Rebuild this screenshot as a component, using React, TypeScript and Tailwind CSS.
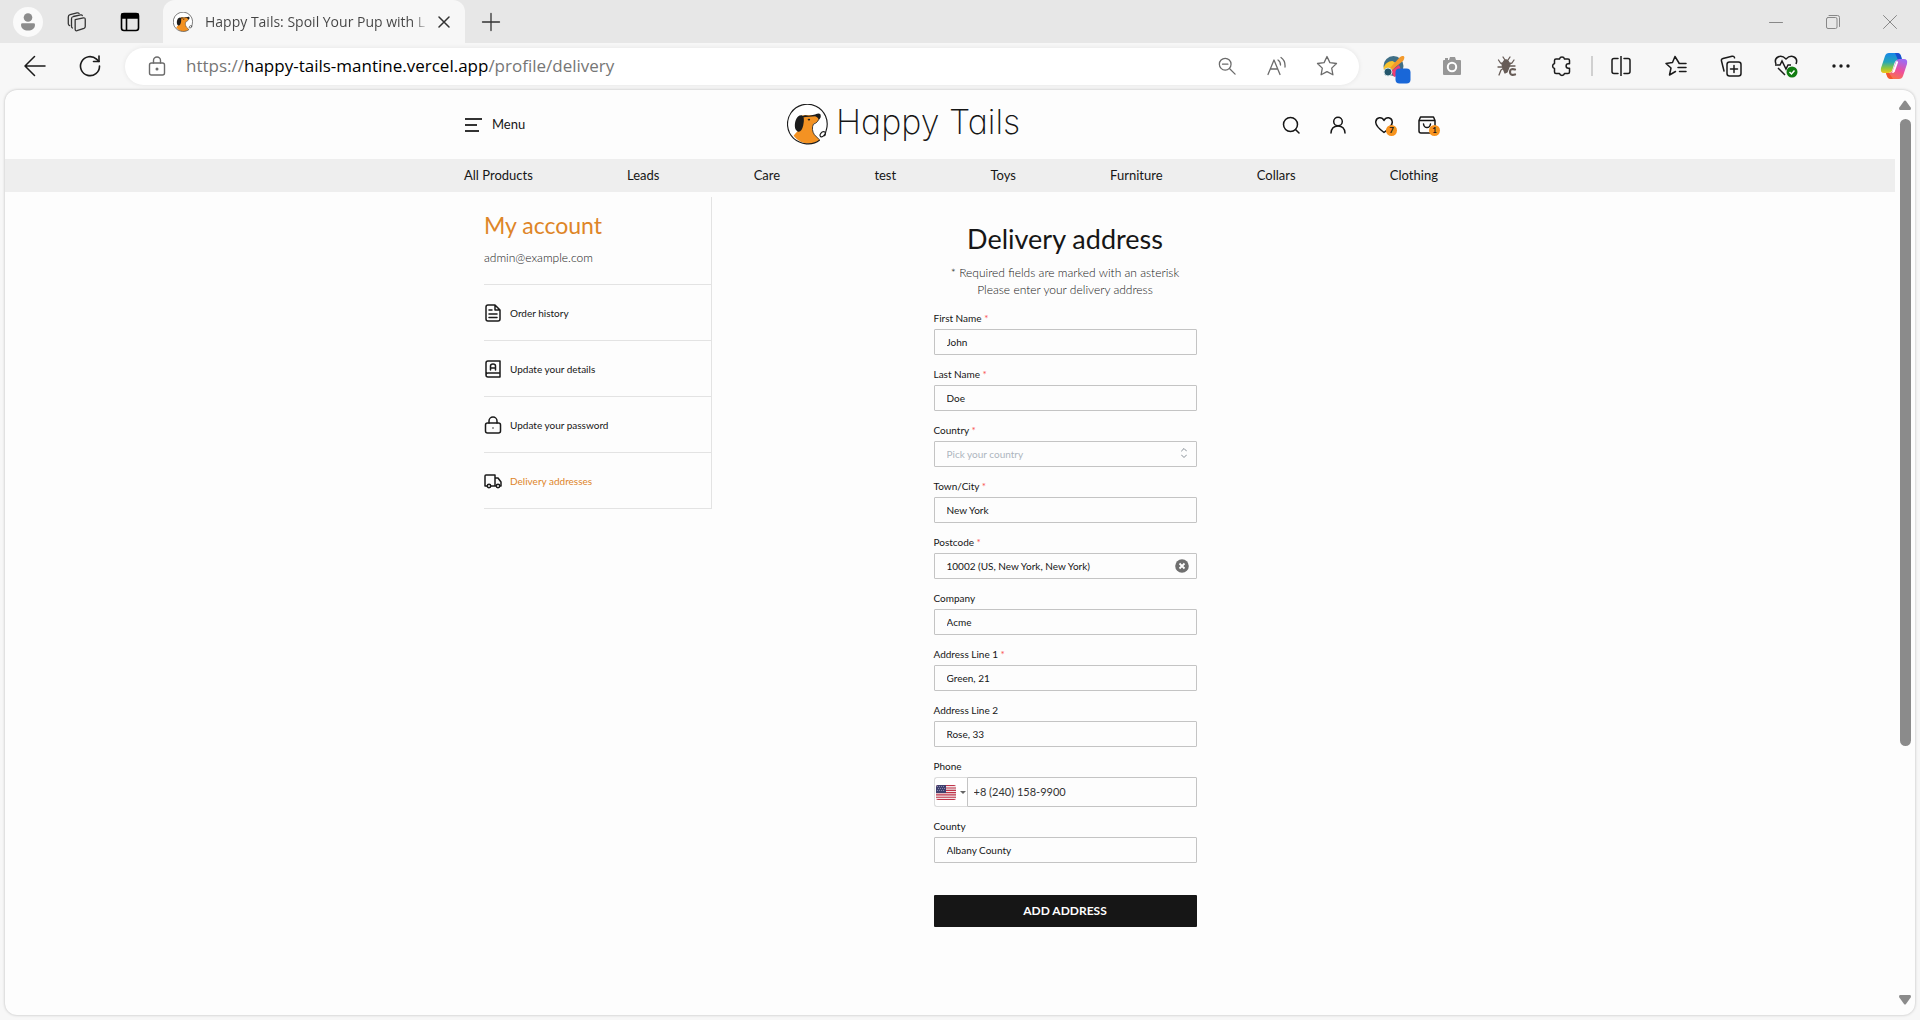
import type { ReactNode } from "react";

type SvgProps = { className?: string; children: ReactNode; box?: string; sw?: number };
const Stroke = ({ className = "size-5", children, box = "0 0 24 24", sw = 1.5 }: SvgProps) => (
  <svg className={className} viewBox={box} fill="none" stroke="currentColor" strokeWidth={sw} strokeLinecap="round" strokeLinejoin="round" aria-hidden="true">
    {children}
  </svg>
);

const DogMark = ({ className }: { className: string }) => (
  <svg className={className} viewBox="0 0 124 124" aria-hidden="true">
    <circle cx="62" cy="62" r="60" fill="#fff" />
    <path d="M20 96C25 88 33 82 38 76C42 68 43 48 46 35C54 30 60 36 68 33C78 34 88 33 98 36C98 48 92 56 80 60C75 70 76 84 83 93L99 109C76 128 40 122 20 96Z" fill="#f39223" />
    <path d="M99 109C76 128 40 122 20 104A60 60 0 1 1 119 78C117 92 108 102 102 99C96 94 105 82 113 84C118 86 117 93 113 97" fill="none" stroke="#1c1c1c" strokeWidth="3.5" />
    <path d="M98 38C97 50 90 58 80 61C75 70 76 84 83 93L98 108" fill="none" stroke="#1c1c1c" strokeWidth="2.5" />
    <path d="M47 37C59 30 62 38 74 34L85 32C92 29 97 27 101 31C104 38 101 44 97 47C94 42 90 39 85 37C73 38 60 38 47 41Z" fill="#1c1c1c" />
    <path d="M45 34C54 38 51 55 49 65C46 79 40 86 32 83C22 79 22 60 27 48C30 39 37 33 45 34Z" fill="#1c1c1c" />
    <path d="M62 48C64 43 70 44 70 46C70 50 66 51 64 49" fill="#1c1c1c" />
  </svg>
);

const TitleBar = () => (
  <div className="flex h-[43px] items-center bg-[#e7e7e7] text-[#333]">
    <button aria-label="Profile" className="ml-[13px] flex size-[30px] items-center justify-center rounded-full bg-[#fafafa]">
      <svg className="size-[18px] fill-[#8c8c8c]" viewBox="0 0 18 18"><circle cx="9" cy="4.5" r="4.3" /><path d="M2 11.5Q2 10.300 3.500 10.300H14.500Q16 10.300 16 11.500C16 15.500 13 17.500 9 17.500S2 15.500 2 11.500Z" /></svg>
    </button>
    <button aria-label="Workspaces" className="ml-[23px] w-[22px]">
      <Stroke className="size-[22px]" sw={1.4}><path d="M10 9.500 19 7.500Q21 7.200 21 9.200V17Q21 18.500 19.600 19L12 21.500Q10 22 10 20Z" /><path d="M7 18.500Q6 18 6 16.500V8.500Q6 6.500 8 6L16 4.200Q17.500 4 17.800 5" /><path d="M4 16Q2.500 15.500 2.500 14V6.500Q2.500 4.500 4.500 4L12 2Q13.800 1.700 14.300 2.700" /></Stroke>
    </button>
    <button aria-label="Tab actions" className="ml-8 w-5 text-black">
      <Stroke className="size-5" sw={1.6} box="0 0 20 20"><rect x="1.500" y="1.500" width="17" height="17" rx="2.500" /><path d="M2 2h16v4H2Z" fill="currentColor" /><path d="M6.500 6v12" /></Stroke>
    </button>
    <div className="ml-[23px] flex h-full w-[302px] items-center rounded-t-xl bg-[#f7f7f7]">
      <DogMark className="ml-[10px] size-5 shrink-0" />
      <span className="ml-3 w-[223px] whitespace-nowrap bg-linear-to-r from-[#444] from-93% to-[#eee] bg-clip-text text-sm text-transparent">Happy Tails: Spoil Your Pup with L</span>
      <button aria-label="Close tab" className="ml-[10px]"><Stroke className="size-3" box="0 0 12 12"><path d="m1 1 10 10M11 1 1 11" /></Stroke></button>
    </div>
    <button aria-label="New tab" className="ml-4"><Stroke className="size-5" box="0 0 20 20" sw={1.3}><path d="M10 1.500v17M1.500 10h17" /></Stroke></button>
    <div className="mr-0.5 ml-auto flex text-[#888]">
      <button aria-label="Minimize" className="flex w-[57px] justify-center"><Stroke className="size-[14px]" box="0 0 14 14" sw={1}><path d="M.5 7.500h13" /></Stroke></button>
      <button aria-label="Restore" className="flex w-[57px] justify-center"><Stroke className="size-[14px]" box="0 0 14 14" sw={1}><rect x=".5" y="2.500" width="10.500" height="11" rx="1.500" /><path d="M3 .5h8.500q2 0 2 2v9" /></Stroke></button>
      <button aria-label="Close window" className="flex w-[57px] justify-center"><Stroke className="size-[14px]" box="0 0 14 14" sw={1}><path d="m.5.5 13 13M13.500.5l-13 13" /></Stroke></button>
    </div>
  </div>
);

const cell = "flex h-9 w-[55px] items-center justify-center";

const Copilot = () => (
  <svg className="size-7" viewBox="0 0 28 28" aria-hidden="true">
    <defs>
      <linearGradient id="cpA" x1="0" y1="0" x2="0" y2="1"><stop offset="0" stopColor="#1686e8" /><stop offset=".45" stopColor="#25a6b8" /><stop offset=".75" stopColor="#8cc63f" /><stop offset="1" stopColor="#f5c518" /></linearGradient>
      <linearGradient id="cpB" x1="0.600" y1="0" x2="0.200" y2="1"><stop offset="0" stopColor="#a06bf0" /><stop offset=".5" stopColor="#ee4f9c" /><stop offset="1" stopColor="#fb7a3c" /></linearGradient>
    </defs>
    <path d="M9 1H17Q20 1 21 4L22 8H18Q15.500 8 14.500 11L12 19Q11 21 8.500 21H4Q0 21 1 16L5 4Q6 1 9 1Z" fill="url(#cpA)" />
    <path d="M15 1h2.500Q20 1 21 4l1 4h-4Z" fill="#1b4fd0" />
    <path d="M19 27H11Q8 27 7 24L6 21H9Q12 21 13 18L16 9Q17 7 19.500 7H24Q28 7 27 12L23 24Q22 27 19 27Z" fill="url(#cpB)" />
    <path d="M13 27H11Q8 27 7 24L6 21H9Z" fill="#f2552c" />
    <path d="m16.500 9-4.500 12q2 0 2.800-1.500l3.200-9q.5-1.500-1.500-1.500Z" fill="#fff" />
  </svg>
);

const Toolbar = () => (
  <div className="flex h-[46px] items-center bg-[#f7f7f7] text-[#1b1b1b]">
    <button aria-label="Back" className="ml-6"><Stroke className="size-[22px]" box="0 0 22 22"><path d="M21 11H1.500M10.500 1.500 1 11l9.500 9.500" /></Stroke></button>
    <button aria-label="Refresh" className="ml-[33px]"><Stroke className="size-[22px]" box="0 0 22 22" sw={1.6}><path d="M20.500 11A9.500 9.500 0 1 1 17.500 4.200L20 6.500" /><path d="M20 1v5.500h-5.500" /></Stroke></button>
    <div className="ml-6 flex h-[37px] min-w-0 flex-1 items-center rounded-full bg-white text-[#6b6b6b] shadow-[0_0_5px_rgba(0,0,0,0.08)]">
      <Stroke className="ml-[22px] size-5 shrink-0" box="0 0 20 20" sw={1.4}><rect x="2.500" y="7" width="15" height="12" rx="2" /><path d="M6.500 7V4.500a3.500 3.500 0 0 1 7 0V7" /><circle cx="10" cy="13" r=".8" fill="currentColor" /></Stroke>
      <span className="ml-[19px] flex-1 truncate text-[17px] text-[#767676]">https://<span className="text-black">happy-tails-mantine.vercel.app</span>/profile/delivery</span>
      <button aria-label="Zoom out" className="flex w-[50px] justify-center"><Stroke className="size-[18px]" box="0 0 20 20" sw={1.4}><circle cx="8" cy="8" r="6.500" /><path d="m13 13 6 6M5 8h6" /></Stroke></button>
      <button aria-label="Read aloud" className="flex w-[50px] justify-center"><Stroke className="size-5" box="0 0 20 20" sw={1.3}><path d="M1 18.500 7 4l6 14.500M3.500 13h7M11 4q2.500 1.500 2.500 5M14 1.500q4.500 3 4 9.500" /></Stroke></button>
      <button aria-label="Favorite" className="mr-[7px] flex w-[50px] justify-center"><Stroke className="size-[22px]" box="0 0 22 22" sw={1.3}><path d="m11 1.500 2.900 6.100 6.600.9-4.800 4.600 1.200 6.700-5.900-3.200-5.900 3.200 1.200-6.700L1.500 8.500l6.600-.9Z" /></Stroke></button>
    </div>
    <div className="ml-[10px] flex items-center">
      <button aria-label="Color picker extension" className={`${cell} pt-2`}>
        <svg className="size-7" viewBox="0 0 28 28"><circle cx="10.500" cy="10" r="10" fill="#3f6f86" /><path d="M.5 12a9 9 0 0 1 9-7l5 3-7 8-6 1Z" fill="#f8c22d" /><path d="M8 15l8-6 4 9-9 3Z" fill="#ee3d73" /><path d="m7 12 10-11q3-2 4-.5t-1 4.500L10 13Z" fill="#f39a2c" /><circle cx="5" cy="16" r="4" fill="#24566b" stroke="#cfe0e4" /><rect x="12.500" y="12.500" width="15" height="15" rx="4" fill="#1967d8" /></svg>
      </button>
      <button aria-label="Screenshot extension" className={cell}>
        <svg className="size-5" viewBox="0 0 20 20"><path d="M3 4V2h3v2h1l1-3h5l1 3h4q1 0 1 1v13q0 1-1 1H2q-1 0-1-1V5q0-1 1-1Z" fill="#979797" /><circle cx="10" cy="11" r="4.200" fill="none" stroke="#fff" strokeWidth="2" /></svg>
      </button>
      <button aria-label="Bug extension" className={`${cell} text-[#675c57]`}>
        <Stroke className="size-5" box="0 0 20 20" sw={1.3}><path d="M7 5q2-2 4 0l2 3-1 3-2 5-2 1-2-5-1-4Z" fill="currentColor" /><path d="M6 1 8 4M13 1l-2 3M1.500 4l2 3 4 1M17 4l-2 3-4 1M1 11h6M2 19l2-5 3-2M11 10h7" /><path d="M18 13.500q-5-1.500-5 2.500t5 2.500" strokeWidth="2.200" /></Stroke>
      </button>
      <button aria-label="Extensions" className={cell}><Stroke className="size-[22px]" box="0 0 22 22"><path d="M5 4h3.500a2.600 2.600 0 0 1 5 0H17q1.500 0 1.500 1.500v3.300h-1.200a2.200 2.200 0 0 0 0 4.400h1.200v3.800q0 1.500-1.500 1.500h-3.500a2.600 2.600 0 0 1-5 0H5q-1.500 0-1.500-1.500v-3.500a2.600 2.600 0 0 1 0-5V5.500Q3.500 4 5 4Z" /></Stroke></button>
      <span className="ml-0.5 h-5 w-0.5 bg-[#d0d0d0]" />
      <button aria-label="Split screen" className={cell}><Stroke className="size-5" box="0 0 20 20"><path d="M10 0v20M7 2.500H3q-2 0-2 2v11q0 2 2 2h4M13 2.500h4q2 0 2 2v11q0 2-2 2h-4" /></Stroke></button>
      <button aria-label="Favorites list" className={cell}><Stroke className="size-[22px]" box="0 0 22 22"><path d="M14 8 10 1.500 7.500 7.500 1 8.500l5 4.500-1.500 7 6-3.500M14 8.500h7M13 12.500h8M14.500 16.500H21" /></Stroke></button>
      <button aria-label="Collections" className={cell}><Stroke className="size-[22px]" box="0 0 22 22"><rect x="7" y="7" width="14" height="14" rx="2.500" /><path d="M14 10.500v7M10.500 14h7M4 16 1.500 6Q1 4 3 3.500L12 1.300q2-.5 2.500 1.500" /></Stroke></button>
      <button aria-label="Browser essentials" className={cell}>
        <svg className="size-6" viewBox="0 0 24 24" fill="none" stroke="currentColor" strokeWidth="1.500"><path d="M2 10Q0 5 4 3t8 2q4-4 8-2t2 7M4 14l7 7M1 11h5l2-4 4 8 2-4h3" /><circle cx="18" cy="18" r="5.500" fill="#107c10" stroke="none" /><path d="m15.500 18 2 2 3-3.500" stroke="#fff" /></svg>
      </button>
      <button aria-label="Settings" className={cell}><svg className="h-1 w-[18px] fill-current" viewBox="0 0 18 4"><circle cx="2" cy="2" r="1.700" /><circle cx="9" cy="2" r="1.700" /><circle cx="16" cy="2" r="1.700" /></svg></button>
      <button aria-label="Copilot" className="flex h-9 w-[52px] items-center justify-center"><Copilot /></button>
    </div>
  </div>
);

const Badge = ({ children }: { children: ReactNode }) => (
  <span className="absolute -right-1 -bottom-0.5 flex size-[11px] items-center justify-center rounded-full bg-[#f7931e] text-[8px] leading-none font-bold">{children}</span>
);

const SiteHeader = () => (
  <header className="mx-auto flex h-[69px] w-full max-w-[976px] items-center justify-between pl-0.5">
    <button className="flex items-center gap-[10px] text-[13px]">
      <svg className="h-[14px] w-[18px] stroke-[#333]" viewBox="0 0 18 14" strokeWidth="2"><path d="M1 1h17M1 7h12M1 13h14" /></svg>
      Menu
    </button>
    <a href="#home" className="flex items-start gap-2">
      <DogMark className="size-[41px]" />
      <span className="font-['Inter'] text-[34px] leading-9 font-extralight [font-feature-settings:'cv11','ss01']">Happy Tails</span>
    </a>
    <div className="flex items-center pr-0.5">
      <button aria-label="Search"><Stroke className="size-[18px]" box="0 0 18 18"><circle cx="8.500" cy="8.500" r="7" /><path d="m13.500 13.500 3.500 3.500" /></Stroke></button>
      <button aria-label="Account" className="ml-[29px]"><Stroke className="size-[18px]" box="0 0 18 18"><circle cx="9" cy="5.500" r="4.300" /><path d="M2 17q.5-7 7-7t7 7" /></Stroke></button>
      <button aria-label="Wishlist" className="relative ml-7"><Stroke className="size-[18px]" box="0 0 18 18"><path d="M9 16.500Q0 10 .8 5.500C1.500 1 7 .5 9 4.500 11 .5 16.500 1 17.200 5.500 18 10 9 16.500 9 16.500Z" /></Stroke><Badge>7</Badge></button>
      <button aria-label="Cart" className="relative ml-[25px]"><Stroke className="size-[18px]" box="0 0 18 18"><path d="M1 4.500 2.500 1h13L17 4.500V15q0 2-2 2H3q-2 0-2-2ZM1 4.500h16M5.500 8q.5 3.500 3.500 3.500T12.500 8" /></Stroke><Badge>1</Badge></button>
    </div>
  </header>
);

const categories = ["All Products", "Leads", "Care", "test", "Toys", "Furniture", "Collars", "Clothing"];

const accountLinks: { label: string; icon: ReactNode; active?: boolean }[] = [
  { label: "Order history", icon: <path d="M11 1H4Q2 1 2 3v12q0 2 2 2h10q2 0 2-2V6ZM11 1v5h5M5 6h3M5 10h8M5 13.500h8" /> },
  { label: "Update your details", icon: <path d="M16 13V1H4Q2 1 2 3v12q0 2 2 2h12v-4H4q-2 0-2 2M6.500 10V6q0-2 2.500-2t2.500 2v4M6.500 8h5" /> },
  { label: "Update your password", icon: <><rect x="1.500" y="7" width="15" height="10" rx="2" /><path d="M5 7V5a4 4 0 0 1 8 0v2M9 12v.1" /></> },
  { label: "Delivery addresses", active: true, icon: <><path d="M3 14H1V4q0-1 1-1h9v11H7M11 6h3l3 4v4h-1M12 14h-1" /><circle cx="5" cy="14" r="1.700" /><circle cx="14" cy="14" r="1.700" /></> },
];

const Sidebar = () => (
  <aside className="mt-[5px] w-[228px] shrink-0 border-r border-[#e3e3e3]">
    <div className="h-[88px] border-b border-[#e3e3e3] pt-[13px]">
      <h2 className="text-[23px] leading-[30px] text-[#de8528]">My account</h2>
      <p className="mt-[10px] text-xs leading-4 font-light">admin@example.com</p>
    </div>
    <nav>
      {accountLinks.map((l) => (
        <a key={l.label} href="#account" className={`flex h-14 items-center gap-2 border-b border-[#e3e3e3] pt-px text-[10px] ${l.active ? "text-[#de8528]" : ""}`}>
          <Stroke className="size-[18px] text-[#1b1b1b]" box="0 0 18 18">{l.icon}</Stroke>
          {l.label}
        </a>
      ))}
    </nav>
  </aside>
);

const Label = ({ id, text, required }: { id: string; text: string; required?: boolean }) => (
  <label htmlFor={id} className="block text-[10px] leading-4">
    {text}
    {required && <span className="text-[#fa5252]"> *</span>}
  </label>
);

const inputCls = "h-[26px] w-full rounded-[1px] border border-[#c4c4c4] bg-transparent px-3 text-[10px] outline-none";

type FieldProps = { id: string; label: string; value: string; required?: boolean; children?: ReactNode };
const Field = ({ id, label, value, required, children }: FieldProps) => (
  <div className="flex flex-col gap-[3px]">
    <Label id={id} text={label} required={required} />
    <div className="relative flex">
      <input id={id} defaultValue={value} className={inputCls} />
      {children}
    </div>
  </div>
);

const Flag = () => (
  <svg className="h-[15px] w-5 rounded-[2px]" viewBox="0 0 20 15" aria-hidden="true">
    <rect width="20" height="15" fill="#f1e6e8" />
    <path d="M0 .5h20M0 3h20M0 5.300h20M0 7.600h20M0 9.900h20M0 12.200h20M0 14.500h20" stroke="#c0344a" strokeWidth="1.150" />
    <rect width="10" height="8" fill="#40406f" />
    <path d="M1 1.500h8M2 3.500h7M1 5.500h8" stroke="#a9a9c6" strokeWidth=".7" strokeDasharray="1 1" />
  </svg>
);

const AddressForm = () => (
  <form className="mx-auto mt-[31px] w-[263px]" onSubmit={(e) => e.preventDefault()}>
    <h1 className="text-center text-[27px] leading-8 whitespace-nowrap">Delivery address</h1>
    <p className="mt-[9px] text-center text-xs leading-[17px] font-light">
      * Required fields are marked with an asterisk
      <br />
      Please enter your delivery address
    </p>
    <div className="mt-3 flex flex-col gap-[11px]">
      <Field id="first" label="First Name" value="John" required />
      <Field id="last" label="Last Name" value="Doe" required />
      <div className="flex flex-col gap-[3px]">
        <Label id="country" text="Country" required />
        <div className="relative flex">
          <select id="country" defaultValue="" className={`${inputCls} appearance-none text-[#adb5bd]`}>
            <option value="">Pick your country</option>
          </select>
          <Stroke className="pointer-events-none absolute top-[7px] right-[10px] h-[10px] w-[6px] text-[#868e96]" box="0 0 6 10" sw={1}><path d="M.5 3 3 .5 5.500 3M.5 7 3 9.500 5.500 7" /></Stroke>
        </div>
      </div>
      <Field id="town" label="Town/City" value="New York" required />
      <Field id="postcode" label="Postcode" value="10002 (US, New York, New York)" required>
        <button type="button" aria-label="Clear postcode" className="absolute top-[6px] right-2">
          <svg className="size-[14px]" viewBox="0 0 14 14"><circle cx="7" cy="7" r="6.800" fill="#6f6f6f" /><path d="m4.500 4.500 5 5M9.500 4.500l-5 5" stroke="#fff" strokeWidth="1.800" /></svg>
        </button>
      </Field>
      <Field id="company" label="Company" value="Acme" />
      <Field id="line1" label="Address Line 1" value="Green, 21" required />
      <Field id="line2" label="Address Line 2" value="Rose, 33" />
      <div className="flex flex-col gap-[3px]">
        <Label id="phone" text="Phone" />
        <div className="flex h-[30px]">
          <button type="button" aria-label="Phone country" className="flex w-[33px] shrink-0 items-center gap-1 rounded-l-[3px] border border-r-0 border-[#dcdcdc] bg-white pl-px">
            <Flag />
            <svg className="h-[3px] w-[6px] fill-[#666]" viewBox="0 0 6 3"><path d="M0 0h6L3 3Z" /></svg>
          </button>
          <input id="phone" defaultValue="+8 (240) 158-9900" className="min-w-0 flex-1 rounded-r-[1px] border border-[#c4c4c4] bg-transparent px-[6px] text-[11px] text-[#333] outline-none" />
        </div>
      </div>
      <Field id="county" label="County" value="Albany County" />
    </div>
    <button className="mt-8 h-8 w-full rounded-[1px] bg-[#161616] text-xs font-bold text-white">ADD ADDRESS</button>
  </form>
);

const ScrollBar = () => (
  <div className="flex w-5 shrink-0 flex-col items-center py-[10px]" aria-hidden="true">
    <svg className="h-[10px] w-3 fill-[#8b8b8b]" viewBox="0 0 12 10"><path d="M5 1Q6 0 7 1l5 7q0 2-1 2H1Q0 10 0 8Z" /></svg>
    <div className="mt-[9px] w-[11px] flex-[628] rounded-full bg-[#8b8b8b]" />
    <div className="flex-[249]" />
    <svg className="h-[10px] w-3 fill-[#8b8b8b]" viewBox="0 0 12 10"><path d="M5 9Q6 10 7 9l5-7q0-2-1-2H1Q0 0 0 2Z" /></svg>
  </div>
);

export default function App() {
  return (
    <div className="flex min-h-screen flex-col bg-[#f7f7f7] font-['Open_Sans',sans-serif]">
      <TitleBar />
      <Toolbar />
      <div className="mx-[5px] mt-px mb-[5px] flex flex-1 overflow-hidden rounded-xl bg-[#fdfdfd] shadow-[0_0_3px_rgba(0,0,0,0.25)]">
        <div className="min-w-0 flex-1 font-['Lato',sans-serif] text-[#161616]">
          <SiteHeader />
          <nav className="bg-[#eee]">
            <div className="mx-auto flex h-[33px] w-full max-w-[976px] items-center justify-between pl-0.5 text-[13px]">
              {categories.map((c) => (
                <a key={c} href="#category">{c}</a>
              ))}
            </div>
          </nav>
          <main className="mx-auto flex w-full max-w-[976px] items-start pr-5 pl-[22px]">
            <Sidebar />
            <div className="min-w-0 flex-1 pb-20">
              <AddressForm />
            </div>
          </main>
        </div>
        <ScrollBar />
      </div>
    </div>
  );
}
